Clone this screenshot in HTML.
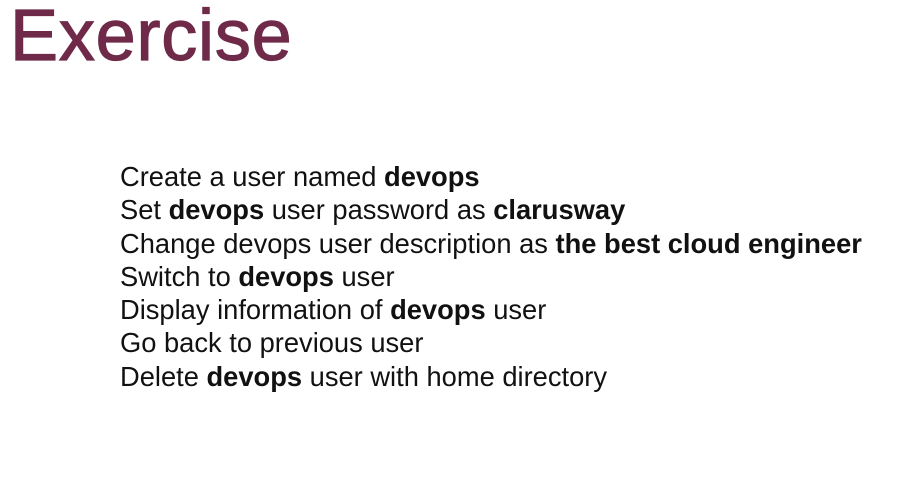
<!DOCTYPE html>
<html><head><meta charset="utf-8"><style>
html,body{margin:0;padding:0;background:#fff;width:920px;height:481px;overflow:hidden}
h1{position:absolute;left:10px;top:-5px;margin:0;font:72px "Liberation Sans",sans-serif;color:#6e2a48;letter-spacing:0.8px;-webkit-text-stroke:1.2px #6e2a48}
.b{position:absolute;left:120px;top:160px;font:27.3px "Liberation Sans",sans-serif;color:#111;line-height:33.3px}
b{font-weight:bold}
</style></head><body>
<h1>Exercise</h1>
<div class="b">
Create a user named <b>devops</b><br>
Set <b>devops</b> user password as <b>clarusway</b><br>
Change devops user description as <b>the best cloud engineer</b><br>
Switch to <b>devops</b> user<br>
Display information of <b>devops</b> user<br>
Go back to previous user<br>
Delete <b>devops</b> user with home directory
</div>
</body></html>
